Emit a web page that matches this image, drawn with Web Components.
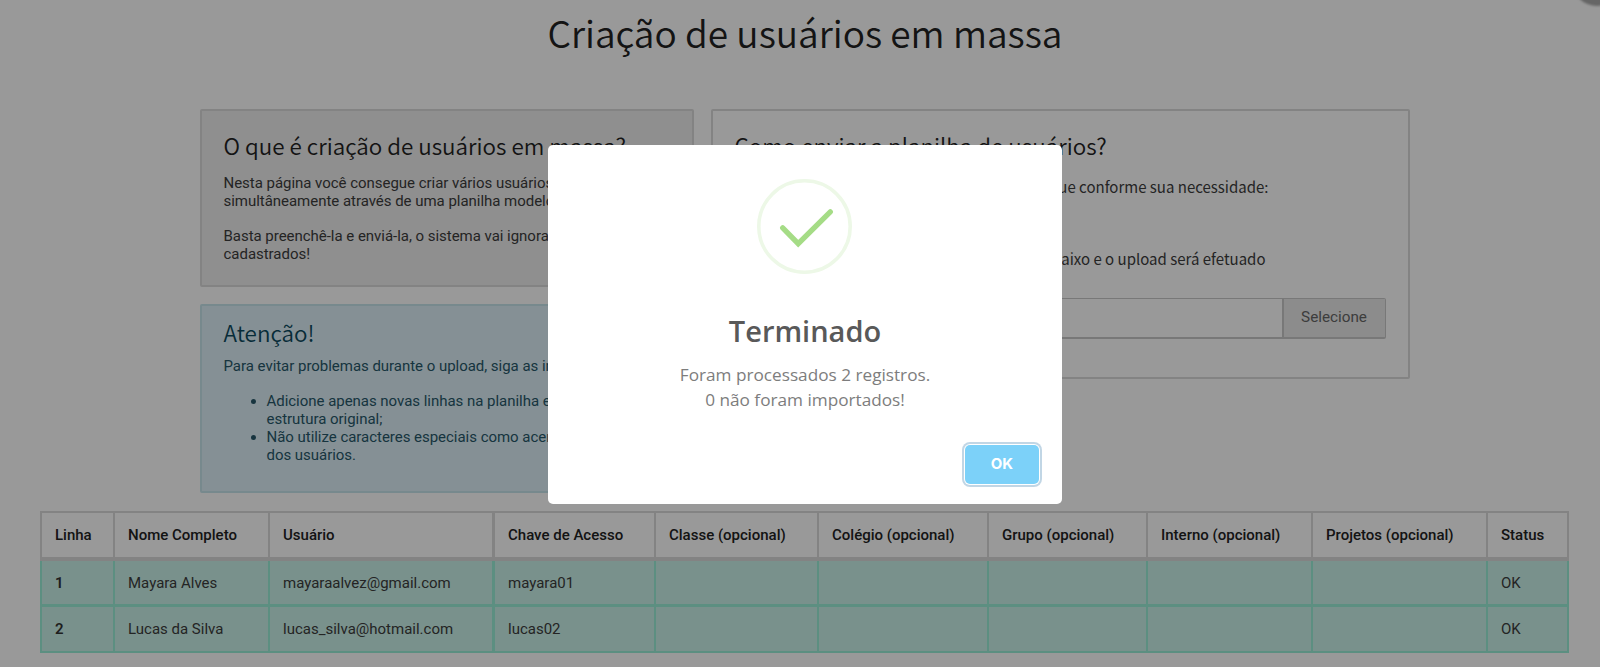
<!DOCTYPE html>
<html lang="pt-BR">
<head>
<meta charset="utf-8">
<title>Criação de usuários em massa</title>
<style>
	html, body {
		margin: 0;
		height: 667px;
		overflow: hidden;
		background: #fff;
	}
	body {
		font-family: Roboto, "Liberation Sans", sans-serif;
		--heading-font: "Noto Sans CJK JP", "Open Sans", sans-serif;
	}
</style>
</head>
<body>
<bulk-users-page></bulk-users-page>

<script>
(function() {
	function define(name, html, setup) {
		const template = document.createElement("template");
		template.innerHTML = html;
		customElements.define(name, class extends HTMLElement {
			constructor() {
				super();
				this._shadowRoot = this.attachShadow({mode: "open"});
				this._shadowRoot.appendChild(template.content.cloneNode(true));
			}

			connectedCallback() {
				if (setup) {
					setup(this, this._shadowRoot);
				}
			}
		});
	}

	define("info-panel", `
		<style>
		:host {
			display: block;
			box-sizing: border-box;
			padding: 18px 21.5px 0 21.5px;
			border: 2px solid #dadada;
			border-radius: 2px;
			color: #3c3c3c;
			font-size: 15px;
			letter-spacing: -.03px;
			line-height: 17.9px;
		}
		:host([kind="well"]) {
			background: #eee;
			height: 178px;
		}
		:host([kind="info"]) {
			background: #def1f8;
			border-color: #c6e4ec;
			color: #27586a;
			height: 189px;
			padding-top: 11px;
		}
		:host([kind="plain"]) {
			height: 270px;
			padding-right: 22.5px;
		}
		h3 {
			margin: 0 0 14px;
			font: 350 22.4px/32px var(--heading-font);
			letter-spacing: 0;
			white-space: nowrap;
			color: #222;
		}
		:host([kind="info"]) h3 {
			color: #0c4a60;
			line-height: 30px;
			margin-bottom: 11px;
		}
		</style>
		<h3><slot name="title"></slot></h3>
		<slot></slot>
	`);

	define("file-picker", `
		<style>
		:host {
			display: flex;
			box-sizing: border-box;
			height: 41px;
			border: 1.5px solid #c8c8c8;
			border-bottom-width: 2px;
			border-radius: 2px;
		}
		.name {
			flex: 1;
		}
		.browse {
			box-sizing: border-box;
			width: 103px;
			border-left: 2px solid #c8c8c8;
			background: #eaeaea;
			color: #666;
			font-size: 15.3px;
			line-height: 36px;
			text-align: center;
		}
		</style>
		<div class="name"></div>
		<div class="browse"><slot></slot></div>
	`);

	define("result-table", `
		<style>
		:host {
			display: block;
			border: 2px solid #dadada;
			border-bottom: 0;
			font-size: 15px;
			color: #3c3c3c;
		}
		.row {
			display: grid;
			grid-template-columns: 73px 155px 225px 161px 163px 170px 159px 165px 175px 79px;
		}
		.cell {
			box-sizing: border-box;
			padding-left: 13px;
			border-right: 2px solid #dadada;
			white-space: nowrap;
		}
		.cell:nth-child(3) {
			border-right-width: 3px;
		}
		.cell:last-child {
			border-right: 0;
		}
		.head {
			height: 44px;
			border-bottom: 4px solid #dadada;
			font-weight: 500;
			line-height: 44px;
			color: #222;
		}
		.body {
			height: 43px;
			margin: 0 -2px;
			border: 2px solid #9aeed8;
			border-top: 0;
			border-bottom-width: 3px;
			background: #caf2e9;
			line-height: 44px;
		}
		.body + .body {
			height: 44px;
			border-bottom-width: 2px;
		}
		.body .cell {
			border-color: #9aeed8;
		}
		.body .cell:first-child {
			font-weight: 600;
			color: #333;
		}
		</style>
		<div id="rows"></div>
	`, function(host, root) {
		const head = ["Linha", "Nome Completo", "Usuário", "Chave de Acesso", "Classe (opcional)",
			"Colégio (opcional)", "Grupo (opcional)", "Interno (opcional)", "Projetos (opcional)", "Status"];
		const rows = [
			["1", "Mayara Alves", "mayaraalvez@gmail.com", "mayara01", "", "", "", "", "", "OK"],
			["2", "Lucas da Silva", "lucas_silva@hotmail.com", "lucas02", "", "", "", "", "", "OK"]
		];
		const toRow = (cells, kind) => `<div class="row ${kind}">` +
			cells.map(text => `<div class="cell">${text}</div>`).join("") + "</div>";
		root.getElementById("rows").innerHTML = toRow(head, "head") + rows.map(r => toRow(r, "body")).join("");
	});

	define("alert-dialog", `
		<style>
		:host {
			display: block;
			position: absolute;
			inset: 0;
			background: rgba(0, 0, 0, .4);
			font-family: "Open Sans", sans-serif;
		}
		.modal {
			display: flex;
			flex-direction: column;
			align-items: center;
			box-sizing: border-box;
			width: 514px;
			height: 359px;
			margin: 145px auto 0;
			padding-top: 34px;
			border-radius: 5px;
			background: #fff;
		}
		svg {
			display: block;
			margin-right: 1px;
		}
		h2 {
			margin: 37px 0 0;
			font-size: 29px;
			line-height: 40px;
			font-weight: 600;
			color: #595959;
		}
		p {
			margin: 12px 0 0;
			font-size: 17.2px;
			line-height: 24.8px;
			text-align: center;
			color: #7d7d7d;
		}
		button {
			align-self: flex-end;
			width: 74px;
			height: 39px;
			margin: 32px 23px 0 0;
			padding: 0;
			border: 0;
			border-radius: 5px;
			background: #7cd1f9;
			box-shadow: 0 0 0 1px #fff, 0 0 0 3px rgba(43, 114, 165, .29);
			color: #fff;
			font: 700 15px/20px Inter, sans-serif;
		}
		</style>
		<div class="modal">
			<svg width="95" height="95" viewBox="0 0 95 95" fill="none">
				<circle cx="47.5" cy="47.5" r="45.7" stroke="#edf8e7" stroke-width="3.6"/>
				<path d="M25.7 48.9 L41.2 64.7 L73.3 32.9" stroke="#a5dc86" stroke-width="5.3" stroke-linecap="round"/>
			</svg>
			<h2><slot name="title"></slot></h2>
			<p><slot></slot></p>
			<button>OK</button>
		</div>
	`);

	define("bulk-users-page", `
		<style>
		:host {
			display: block;
			position: relative;
			width: 1610px;
			height: 667px;
			overflow: hidden;
		}
		h1 {
			margin: 0;
			height: 109px;
			padding-top: 5px;
			box-sizing: border-box;
			font: 350 37px/54px var(--heading-font);
			text-align: center;
			color: #222;
		}
		.columns {
			display: flex;
			gap: 17px;
			width: 1210px;
			height: 402px;
			margin: 0 auto;
		}
		.left {
			display: flex;
			flex-direction: column;
			gap: 17px;
			width: 494px;
		}
		.right {
			flex: 1;
		}
		p {
			margin: 0;
			white-space: nowrap;
		}
		p + p {
			margin-top: 17px;
		}
		ul {
			margin: 16px 0 0;
			padding-left: 43px;
			line-height: 18px;
			white-space: nowrap;
		}
		.steps {
			padding-top: 1px;
		}
		.steps p {
			width: 534px;
			font: 400 15px/22px var(--heading-font);
			letter-spacing: 0;
			text-align: right;
		}
		.steps p + p {
			width: 531px;
			margin-top: 50px;
		}
		file-picker {
			margin-top: 28px;
		}
		result-table {
			margin: 0 41px 0 40px;
		}
		.bubble {
			position: absolute;
			top: -44px;
			left: 1572px;
			width: 50px;
			height: 50px;
			border-radius: 50%;
			background: #aaa;
			filter: blur(1px);
		}
		</style>
		<h1>Criação de usuários em massa</h1>
		<div class="columns">
			<div class="left">
				<info-panel kind="well">
					<span slot="title">O que é criação de usuários em massa?</span>
					<p>Nesta página você consegue criar vários usuários<br>simultâneamente através de uma planilha modelo.</p>
					<p>Basta preenchê-la e enviá-la, o sistema vai ignorar os<br>cadastrados!</p>
				</info-panel>
				<info-panel kind="info">
					<span slot="title">Atenção!</span>
					<p>Para evitar problemas durante o upload, siga as instruções:</p>
					<ul>
						<li>Adicione apenas novas linhas na planilha e mantenha<br>estrutura original;</li>
						<li>Não utilize caracteres especiais como acentos<br>dos usuários.</li>
					</ul>
				</info-panel>
			</div>
			<info-panel kind="plain" class="right">
				<span slot="title">Como enviar a planilha de usuários?</span>
				<div class="steps">
					<p>Baixe a planilha modelo e adeque conforme sua necessidade:</p>
					<p>Selecione o arquivo no campo abaixo e o upload será efetuado</p>
				</div>
				<file-picker>Selecione</file-picker>
			</info-panel>
		</div>
		<result-table></result-table>
		<div class="bubble"></div>
		<alert-dialog>
			<span slot="title">Terminado</span>
			Foram processados 2 registros.<br>0 não foram importados!
		</alert-dialog>
	`);
})();
</script>
</body>
</html>
